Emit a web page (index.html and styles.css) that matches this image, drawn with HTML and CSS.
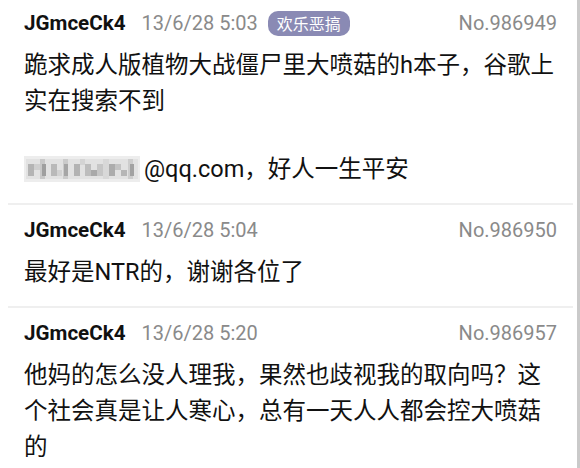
FILE: index.html
```html
<!DOCTYPE html>
<html lang="zh-CN">
<head>
    <meta charset="UTF-8">
    <meta name="viewport" content="width=device-width, initial-scale=1.0">
    <title>Thread</title>
    <link rel="stylesheet" href="styles.css">
</head>
<body>
    <div class="page">
        <div class="feed">
            <div class="post first">
                <div class="post-head">
                    <span class="name">JGmceCk4</span>
                    <span class="time">13/6/28 5:03</span>
                    <span class="tag">欢乐恶搞</span>
                    <span class="no">No.986949</span>
                </div>
                <div class="post-body">
                    <p>跪求成人版植物大战僵尸里大喷菇的h本子，谷歌上实在搜索不到</p>
                    <p class="para"><svg class="mosaic" width="116" height="26" viewBox="0 0 116 26">
                        <rect x="0" y="0" width="116" height="26" fill="#ededed"/>
                        <rect x="2" y="3" width="112" height="20" fill="#e2e2e2"/>
                        <rect x="4" y="8" width="6" height="12" fill="#b4b4b4"/>
                        <rect x="10" y="8" width="6" height="6" fill="#cfcfcf"/>
                        <rect x="16" y="3" width="5" height="20" fill="#c8c8c8"/>
                        <rect x="18" y="8" width="4" height="12" fill="#9f9f9f"/>
                        <rect x="27" y="8" width="6" height="12" fill="#b9b9b9"/>
                        <rect x="33" y="14" width="5" height="6" fill="#d2d2d2"/>
                        <rect x="39" y="3" width="5" height="20" fill="#cbcbcb"/>
                        <rect x="40" y="8" width="4" height="12" fill="#a6a6a6"/>
                        <rect x="50" y="8" width="6" height="12" fill="#b3b3b3"/>
                        <rect x="56" y="3" width="5" height="6" fill="#d4d4d4"/>
                        <rect x="61" y="8" width="6" height="12" fill="#bdbdbd"/>
                        <rect x="67" y="14" width="6" height="6" fill="#a9a9a9"/>
                        <rect x="73" y="8" width="6" height="12" fill="#c6c6c6"/>
                        <rect x="79" y="3" width="6" height="20" fill="#d8d8d8"/>
                        <rect x="85" y="8" width="6" height="12" fill="#acacac"/>
                        <rect x="91" y="8" width="6" height="6" fill="#c3c3c3"/>
                        <rect x="97" y="14" width="6" height="6" fill="#b6b6b6"/>
                        <rect x="104" y="3" width="5" height="20" fill="#cdcdcd"/>
                        <rect x="106" y="8" width="4" height="12" fill="#a2a2a2"/>
                    </svg>@qq.com，好人一生平安</p>
                </div>
            </div>

            <div class="post">
                <div class="post-head">
                    <span class="name">JGmceCk4</span>
                    <span class="time">13/6/28 5:04</span>
                    <span class="no">No.986950</span>
                </div>
                <div class="post-body">
                    <p>最好是NTR的，谢谢各位了</p>
                </div>
            </div>

            <div class="post">
                <div class="post-head">
                    <span class="name">JGmceCk4</span>
                    <span class="time">13/6/28 5:20</span>
                    <span class="no">No.986957</span>
                </div>
                <div class="post-body">
                    <p>他妈的怎么没人理我，果然也歧视我的取向吗？这个社会真是让人寒心，总有一天人人都会控大喷菇的</p>
                </div>
            </div>
        </div>
        <div class="scrollbar"></div>
    </div>
</body>
</html>
```

FILE: styles.css
```css
body {
    margin: 0;
    padding: 0;
    background: #fff;
    font-family: Roboto, "Noto Sans CJK SC", sans-serif;
    color: #111;
    overflow: hidden;
}
.page {
    display: flex;
    height: 468px;
}
.feed {
    flex: 1;
    padding: 0 4px 0 8px;
}
.scrollbar {
    width: 3px;
    background: #cacaca;
}
.post {
    border-top: 2px solid #efefef;
    padding: 11px 16px 16px;
}
.post.first {
    border-top: none;
    padding-top: 9px;
}
.post-head {
    display: flex;
    align-items: center;
    height: 28px;
    font-size: 20px;
}
.name {
    font-weight: bold;
    font-size: 20.6px;
    color: #111;
}
.time {
    margin-left: 16px;
    color: #8a8a8a;
}
.tag {
    margin-left: 10px;
    height: 25px;
    line-height: 25px;
    padding: 0 9px;
    border-radius: 10px;
    background: #8a8ab4;
    color: #fff;
    font-family: "Noto Sans CJK SC", sans-serif;
    font-size: 16px;
}
.no {
    margin-left: auto;
    color: #8a8a8a;
}
.post-body {
    margin-top: 10px;
    font-size: 23.5px;
    line-height: 36px;
}
.post-body p {
    margin: 0;
}
.post-body .para {
    margin-top: 32px;
}
.mosaic {
    vertical-align: -5px;
    margin-right: 4px;
}
```
